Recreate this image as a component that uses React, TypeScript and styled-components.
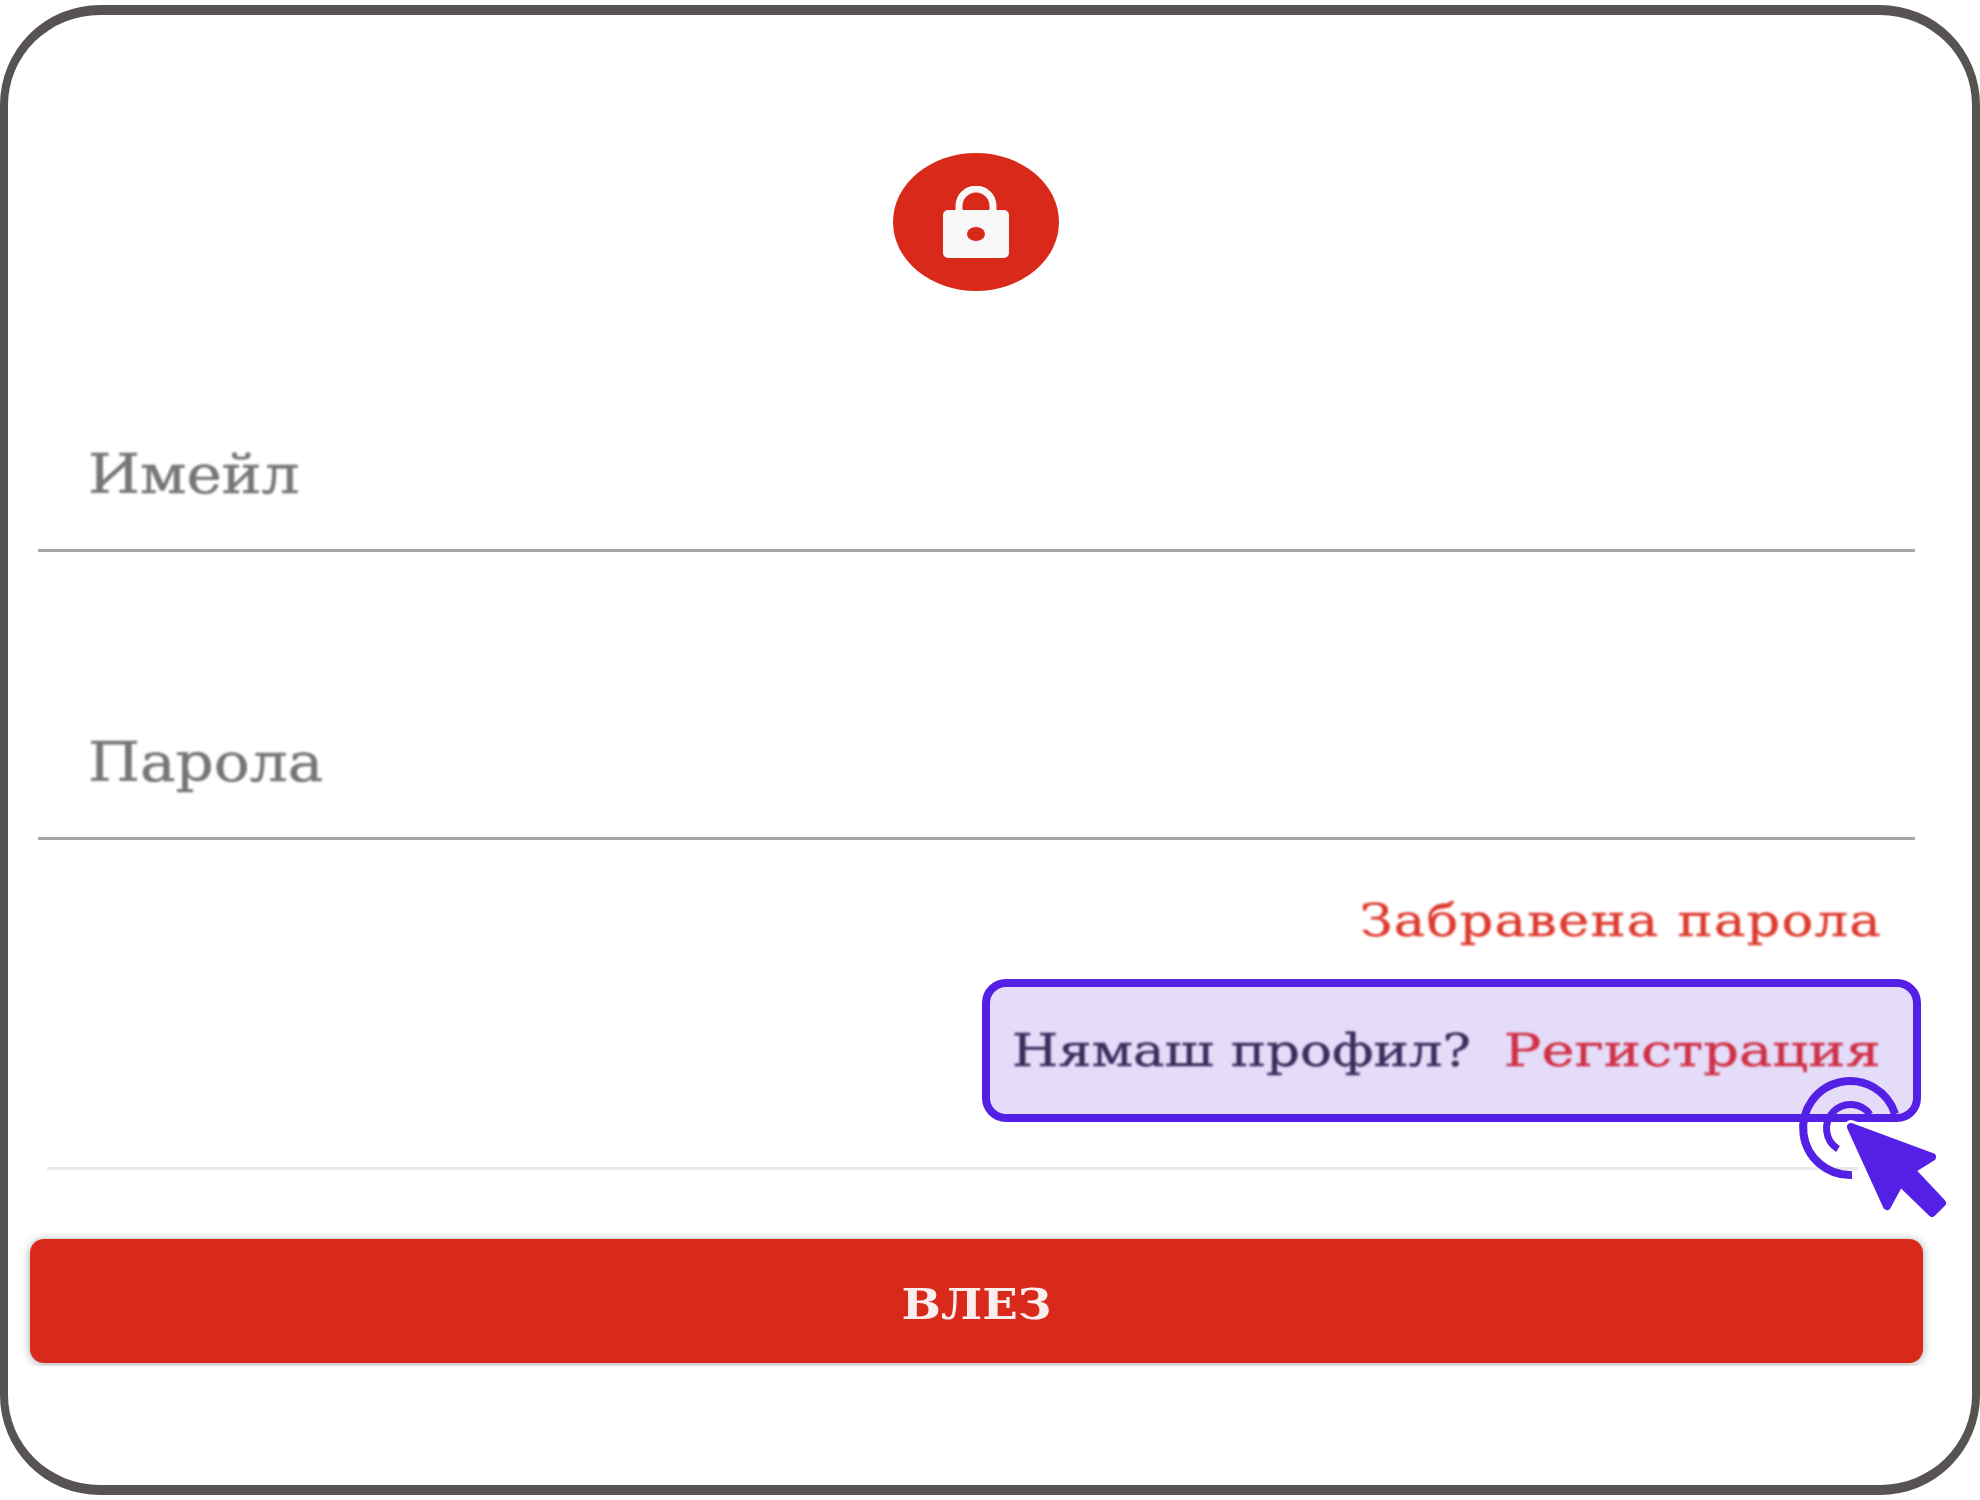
import React from 'react';
import styled, { createGlobalStyle } from 'styled-components';

const GlobalStyle = createGlobalStyle`
  html, body {
    margin: 0;
    padding: 0;
    background: #ffffff;
  }
`;

const serif = `"DejaVu Serif", "Liberation Serif", serif`;

const Frame = styled.main`
  position: relative;
  box-sizing: border-box;
  width: 1980px;
  height: 1490px;
  margin-top: 5px;
  border: solid #575352;
  border-width: 10px 8px;
  border-radius: 100px;
  background: #ffffff;
  overflow: hidden;
  display: flex;
  flex-direction: column;
  font-family: ${serif};
`;

const Avatar = styled.div`
  width: 166px;
  height: 138px;
  margin: 138px 0 0 885px;
  border-radius: 50%;
  background: #d9291b;
  display: flex;
  align-items: center;
  justify-content: center;
  filter: blur(0.6px);
`;

const Field = styled.div<{ $top: number }>`
  box-sizing: border-box;
  height: 120px;
  margin: ${(p) => p.$top}px 57px 0 30px;
  padding: 0 0 44px 50px;
  border-bottom: 3px solid #a6a6a6;
  display: flex;
  align-items: flex-end;
`;

const FieldLabel = styled.span`
  font-size: 54px;
  line-height: 60px;
  color: #777577;
  -webkit-text-stroke: 0.5px #777577;
  transform: scaleX(1.105);
  transform-origin: left center;
  filter: blur(0.9px);
`;

const ForgotRow = styled.div`
  margin: 51px 90px 0 0;
  text-align: right;
  font-size: 44px;
  letter-spacing: 1px;
  line-height: 60px;
  color: #de3a2e;
  -webkit-text-stroke: 0.4px #de3a2e;
  transform: scaleX(1.2);
  transform-origin: right center;
  filter: blur(0.9px);
`;

const SignupBox = styled.div`
  box-sizing: border-box;
  align-self: flex-end;
  width: 939px;
  height: 143px;
  margin: 28px 51px 0 0;
  padding: 0 32px 0 22px;
  border: 8px solid #5420e6;
  border-radius: 24px;
  background: #e5dcfa;
  display: flex;
  align-items: center;
  justify-content: space-between;
  font-size: 44px;
`;

const SignupText = styled.span<{ $accent?: boolean }>`
  color: ${(p) => (p.$accent ? '#cf3045' : '#3a2c5c')};
  -webkit-text-stroke: 0.4px ${(p) => (p.$accent ? '#cf3045' : '#3a2c5c')};
  white-space: nowrap;
  transform: scaleX(${(p) => (p.$accent ? 1.27 : 1.205)});
  transform-origin: ${(p) => (p.$accent ? 'right' : 'left')} center;
  filter: blur(0.9px);
`;

const Divider = styled.div`
  height: 3px;
  margin: 45px 114px 0 39px;
  background: #e8e8e8;
`;

const SubmitButton = styled.button`
  height: 124px;
  margin: 69px 49px 0 22px;
  padding: 6px 0 0;
  border: none;
  border-radius: 14px;
  background: #d9291b;
  box-shadow: 0 1px 10px rgba(0, 0, 0, 0.35);
  clip-path: inset(-20px -20px -3px -20px);
  font-family: ${serif};
  font-size: 42px;
  font-weight: 700;
  color: #fbeeee;
  cursor: pointer;
  filter: blur(0.7px);
`;

const ButtonLabel = styled.span`
  display: block;
  transform: scaleX(1.11);
`;

const ClickCursor = styled.svg`
  position: absolute;
  left: 1782px;
  top: 1055px;
  width: 170px;
  height: 160px;
`;

const LockIcon = () => (
  <svg width="66" height="72" viewBox="0 0 66 72">
    <path d="M16 26v-6a17 17 0 0 1 34 0v6" fill="none" stroke="#f8f8f8" strokeWidth="7" />
    <path
      fillRule="evenodd"
      fill="#f8f8f8"
      d="M5 24h56a5 5 0 0 1 5 5v38a5 5 0 0 1-5 5H5a5 5 0 0 1-5-5V29a5 5 0 0 1 5-5zM33 41a9 7 0 1 0 0 14 9 7 0 0 0 0-14z"
    />
  </svg>
);

const arrow = 'M1851 1127L1932 1157L1911 1170L1942 1203L1932 1213L1900 1182L1887 1206Z';

const App: React.FC = () => (
  <>
    <GlobalStyle />
    <Frame>
      <Avatar>
        <LockIcon />
      </Avatar>
      <Field $top={141}>
        <FieldLabel>Имейл</FieldLabel>
      </Field>
      <Field $top={168}>
        <FieldLabel>Парола</FieldLabel>
      </Field>
      <ForgotRow>Забравена парола</ForgotRow>
      <SignupBox>
        <SignupText>Нямаш профил?</SignupText>
        <SignupText $accent>Регистрация</SignupText>
      </SignupBox>
      <Divider />
      <SubmitButton>
        <ButtonLabel>ВЛЕЗ</ButtonLabel>
      </SubmitButton>
      <ClickCursor viewBox="1790 1070 170 160">
        <path d="M1895 1114A47 47 0 1 0 1852 1175" fill="none" stroke="#5420e6" strokeWidth="8" />
        <path d="M1870 1114.5A24 24 0 1 0 1838 1149" fill="none" stroke="#5420e6" strokeWidth="7" />
        <path d={arrow} fill="#ffffff" stroke="#ffffff" strokeWidth="14" strokeLinejoin="round" />
        <path d={arrow} fill="#5420e6" stroke="#5420e6" strokeWidth="8" strokeLinejoin="round" />
      </ClickCursor>
    </Frame>
  </>
);

export default App;
